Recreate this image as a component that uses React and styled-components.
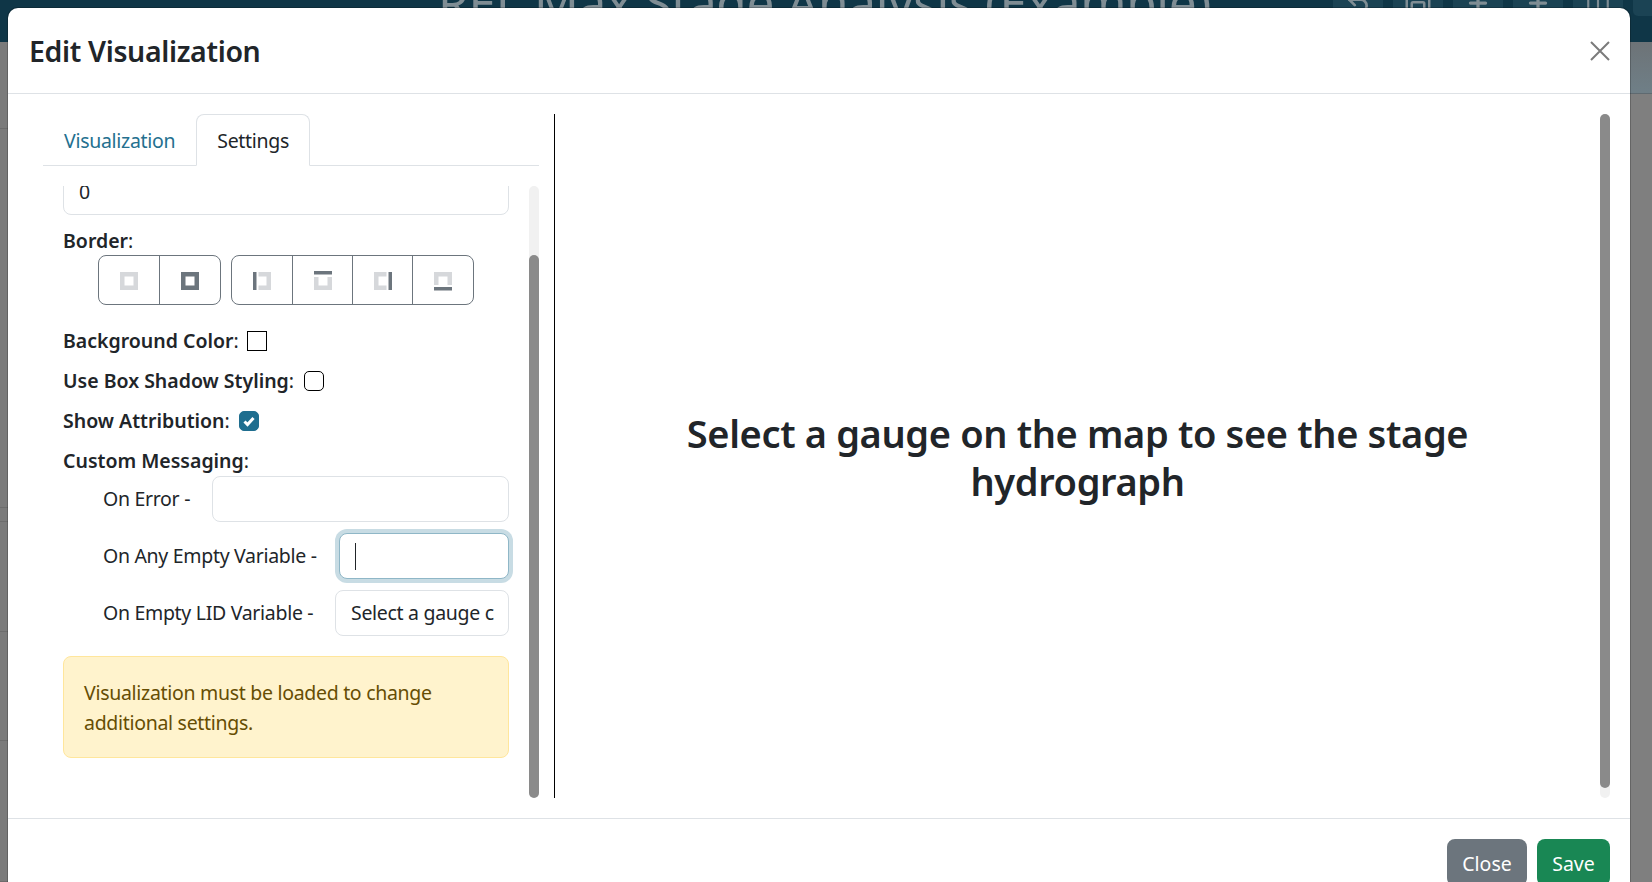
import React from 'react'
import styled, { createGlobalStyle } from 'styled-components'
import { Undo2, Save, Plus, Columns2 } from 'lucide-react'

const GlobalStyle = createGlobalStyle`
  html, body {
    margin: 0;
    padding: 0;
    height: 100%;
    overflow: hidden;
  }
  body {
    font-family: "Noto Sans", "Open Sans", sans-serif;
    font-size: 19.5px;
    line-height: 30px;
    letter-spacing: -0.3px;
    color: #212529;
    background: #7f7f7f;
  }
  * { box-sizing: border-box; }
`

const Page = styled.div`
  position: relative;
  width: 1652px;
  height: 882px;
  overflow: hidden;
  background: #7f7f7f;
`

const TopBar = styled.div`
  height: 42px;
  padding-left: 438px;
  background: #0f3647;
  display: flex;
  color: #7f8d94;
`

const TopTitle = styled.div`
  margin-top: -4px;
  height: 12px;
  font-size: 49.5px;
  line-height: 12px;
  white-space: nowrap;
`

const TopActions = styled.div`
  margin-left: auto;
  margin-right: -31px;
  display: flex;
  gap: 10px;
`

const TopAction = styled.div`
  width: 50px;
  height: 16px;
  background: #1b4354;
  border-radius: 0 0 5px 5px;
  display: flex;
  justify-content: center;
  align-items: flex-end;
  overflow: hidden;
`

const Backdrop = styled.div`
  display: flex;
  height: 840px;
`

const SideStrip = styled.div`
  width: 8px;
  flex: none;
  display: flex;
  flex-direction: column;
`

const SideRow = styled.div`
  height: ${p => p.$h}px;
  flex: none;
  background: #7b7b7b;
  border-bottom: 1px solid #6d6d6d;
`

const BackdropMain = styled.div`
  flex: 1;
`

const SubBar = styled.div`
  height: 52px;
  background: linear-gradient(#6d7377, #6f7f87);
  border-bottom: 1px solid #5f6a70;
`

const Modal = styled.div`
  position: absolute;
  top: 8px;
  left: 8px;
  width: 1622px;
  height: 940px;
  background: #fff;
  border-radius: 10px;
  box-shadow: 0 0 0 1px rgba(0, 0, 0, 0.2);
  display: flex;
  flex-direction: column;
`

const Header = styled.div`
  height: 86px;
  flex: none;
  padding: 1px 20px 0 21px;
  border-bottom: 1px solid #dee2e6;
  display: flex;
  align-items: center;
  justify-content: space-between;
`

const Title = styled.h5`
  margin: 0;
  font-size: 28.5px;
  font-weight: 600;
  letter-spacing: -0.35px;
  line-height: 36px;
`

const CloseX = styled.button`
  border: 0;
  padding: 0;
  background: none;
  width: 20px;
  height: 20px;
  display: flex;
  color: #7b7b7b;
`

const Body = styled.div`
  height: 725px;
  flex: none;
  padding: 20px 20px 20px 35px;
  display: flex;
  border-bottom: 1px solid #dee2e6;
`

const LeftColumn = styled.div`
  width: 512px;
  flex: none;
  padding-right: 15px;
  border-right: 1px solid #000;
  display: flex;
  flex-direction: column;
`

const TabBar = styled.div`
  height: 52px;
  flex: none;
  display: flex;
  align-items: flex-end;
  border-bottom: 1px solid #dee2e6;
`

const Tab = styled.div`
  height: 52px;
  padding: 11px 20px;
  border: 1px solid ${p => (p.$active ? '#dee2e6' : 'transparent')};
  border-bottom-color: ${p => (p.$active ? '#fff' : 'transparent')};
  border-radius: 8px 8px 0 0;
  color: ${p => (p.$active ? '#212529' : '#24708f')};
  background: ${p => (p.$active ? '#fff' : 'transparent')};
  margin-bottom: -1px;
`

const ScrollArea = styled.div`
  flex: 1;
  min-height: 0;
  margin-top: 20px;
  display: flex;
`

const Clip = styled.div`
  flex: 1;
  min-width: 0;
  overflow: hidden;
  padding: 0 20px;
`

const Track = styled.div`
  width: 10px;
  flex: none;
  padding-top: ${p => p.$offset || 0}px;
  background: #f1f1f1;
  border-radius: 5px;
  display: flex;
  flex-direction: column;
`

const Thumb = styled.div`
  flex: ${p => (p.$h ? 'none' : 1)};
  height: ${p => (p.$h ? `${p.$h}px` : 'auto')};
  background: #8a8a8a;
  border-radius: 5px;
`

const Input = styled.div`
  height: 46px;
  flex: none;
  width: ${p => p.$width || 'auto'};
  padding: 0 14px 0 15px;
  border: 1px solid #dee2e6;
  border-radius: 8px;
  background: #fff;
  display: flex;
  align-items: center;
  white-space: nowrap;
  overflow: hidden;
`

const FocusedInput = styled(Input)`
  width: 170px;
  border-color: #8fb7c7;
  box-shadow: 0 0 0 4px #c8dce4;
`

const Caret = styled.span`
  width: 1px;
  height: 27px;
  background: #212529;
`

const TopInput = styled(Input)`
  margin-top: -17px;
`

const FieldLabel = styled.div`
  margin-top: ${p => p.$top || 0}px;
  height: 30px;
  display: flex;
  align-items: center;
`

const Bold = styled.b`
  font-weight: 600;
  letter-spacing: 0;
`

const BorderRow = styled.div`
  margin-top: -1px;
  padding-left: 35px;
  display: flex;
  gap: 10px;
`

const ButtonGroup = styled.div`
  height: 50px;
  padding-right: 1px;
  display: flex;
  border: 1px solid #6c757d;
  border-radius: 8px;
`

const BorderButton = styled.div`
  width: 60px;
  height: 100%;
  padding-top: 2px;
  display: flex;
  align-items: center;
  justify-content: center;
  & + & { border-left: 1px solid #6c757d; }
`

const Swatch = styled.span`
  width: 20px;
  height: 20px;
  margin-left: 9px;
  flex: none;
  border: 1px solid #000;
`

const CheckBox = styled.span`
  width: 20px;
  height: 20px;
  margin-left: 10px;
  flex: none;
  border: 1px solid ${p => (p.$on ? '#1f6e8f' : '#000')};
  border-radius: 5px;
  background: ${p => (p.$on ? '#1f6e8f' : '#fff')};
  display: flex;
  align-items: center;
  justify-content: center;
`

const MessageRow = styled.div`
  padding-left: 40px;
  margin-top: ${p => p.$top || 0}px;
  height: 46px;
  display: flex;
  align-items: center;
  justify-content: space-between;
`

const Alert = styled.div`
  margin-top: 20px;
  height: 102px;
  padding: 21px 20px;
  background: #fff3cd;
  border: 1px solid #ffe69c;
  border-radius: 8px;
  color: #664d03;
`

const RightPanel = styled.div`
  flex: 1;
  min-width: 0;
  display: flex;
`

const Placeholder = styled.div`
  flex: 1;
  min-width: 0;
  padding-top: 2px;
  display: flex;
  align-items: center;
  justify-content: center;
`

const PlaceholderText = styled.h3`
  margin: 0;
  width: 820px;
  text-align: center;
  font-size: 38px;
  font-weight: 600;
  line-height: 48px;
  letter-spacing: -0.36px;
`

const Footer = styled.div`
  padding: 20px;
  display: flex;
  justify-content: flex-end;
  gap: 10px;
`

const ActionButton = styled.button`
  height: 47px;
  width: ${p => p.$w}px;
  border: 0;
  border-radius: 8px;
  padding: 2px 0 0;
  font: inherit;
  color: #fff;
  background: ${p => p.$bg};
`

const GREY = '#6c757d'
const LIGHT = '#d6d8db'

// each variant: the light part of the square, and the dark bar beside it
const borderIcons = {
  none: { light: 'M1 1H19V19H1ZM5.5 5.5V14.5H14.5V5.5Z' },
  all: { dark: 'M1 1H19V19H1ZM5.5 5.5V14.5H14.5V5.5Z' },
  left: { light: 'M6.5 1H19V19H6.5V14.5H14.5V5.5H6.5Z', dark: 'M1 1H4.5V19H1Z' },
  top: { light: 'M1 6H5.5V14.5H14.5V6H19V19H1Z', dark: 'M1 0H19V3.5H1Z' },
  right: { light: 'M13.5 1H1V19H13.5V14.5H5.5V5.5H13.5Z', dark: 'M15.5 1H19V19H15.5Z' },
  bottom: { light: 'M1 1H19V14H14.5V5.5H5.5V14H1Z', dark: 'M1 16H19V19.5H1Z' },
}

function BorderIcon({ side }) {
  const { light, dark } = borderIcons[side]
  return (
    <svg width="20" height="20" viewBox="0 0 20 20">
      {light && <path d={light} fill={LIGHT} fillRule="evenodd" />}
      {dark && <path d={dark} fill={GREY} fillRule="evenodd" />}
    </svg>
  )
}

const sideRows = [87, 379, 14, 110, 109, 141]

export default function App() {
  return (
    <Page>
      <GlobalStyle />
      <TopBar>
        <TopTitle>REL Max Stage Analysis (Example)</TopTitle>
        <TopActions>
          <TopAction><Undo2 size={26} strokeWidth={2.5} /></TopAction>
          <TopAction><Save size={30} strokeWidth={2} /></TopAction>
          <TopAction><Plus size={26} strokeWidth={3} /></TopAction>
          <TopAction><Plus size={26} strokeWidth={3} /></TopAction>
          <TopAction><Columns2 size={26} strokeWidth={2} /></TopAction>
          <TopAction />
        </TopActions>
      </TopBar>
      <Backdrop>
        <SideStrip>
          {sideRows.map((h, i) => <SideRow key={i} $h={h} />)}
        </SideStrip>
        <BackdropMain>
          <SubBar />
        </BackdropMain>
      </Backdrop>
      <Modal>
        <Header>
          <Title>Edit Visualization</Title>
          <CloseX aria-label="Close">
            <svg width="20" height="20" viewBox="0 0 20 20">
              <path d="M1 1l18 18M19 1L1 19" stroke="currentColor" strokeWidth="2" fill="none" />
            </svg>
          </CloseX>
        </Header>
        <Body>
          <LeftColumn>
            <TabBar>
              <Tab>Visualization</Tab>
              <Tab $active>Settings</Tab>
            </TabBar>
            <ScrollArea>
              <Clip>
                <TopInput>0</TopInput>
                <FieldLabel $top={11}><span><Bold>Border</Bold>:</span></FieldLabel>
                <BorderRow>
                  <ButtonGroup>
                    <BorderButton><BorderIcon side="none" /></BorderButton>
                    <BorderButton><BorderIcon side="all" /></BorderButton>
                  </ButtonGroup>
                  <ButtonGroup>
                    <BorderButton><BorderIcon side="left" /></BorderButton>
                    <BorderButton><BorderIcon side="top" /></BorderButton>
                    <BorderButton><BorderIcon side="right" /></BorderButton>
                    <BorderButton><BorderIcon side="bottom" /></BorderButton>
                  </ButtonGroup>
                </BorderRow>
                <FieldLabel $top={21}><span><Bold>Background Color</Bold>:</span><Swatch /></FieldLabel>
                <FieldLabel $top={10}><span><Bold>Use Box Shadow Styling</Bold>:</span><CheckBox /></FieldLabel>
                <FieldLabel $top={10}>
                  <span><Bold>Show Attribution</Bold>:</span>
                  <CheckBox $on>
                    <svg width="14" height="14" viewBox="0 0 14 14">
                      <path d="M2.5 7.5l3 3 6-6.5" stroke="#fff" strokeWidth="3" fill="none" />
                    </svg>
                  </CheckBox>
                </FieldLabel>
                <FieldLabel $top={10}><span><Bold>Custom Messaging</Bold>:</span></FieldLabel>
                <MessageRow>
                  <span>On Error -</span>
                  <Input $width="297px" />
                </MessageRow>
                <MessageRow $top={11}>
                  <span>On Any Empty Variable -</span>
                  <FocusedInput><Caret /></FocusedInput>
                </MessageRow>
                <MessageRow $top={11}>
                  <span>On Empty LID Variable -</span>
                  <Input $width="174px">Select a gauge c</Input>
                </MessageRow>
                <Alert>Visualization must be loaded to change additional settings.</Alert>
              </Clip>
              <Track $offset={69}>
                <Thumb />
              </Track>
            </ScrollArea>
          </LeftColumn>
          <RightPanel>
            <Placeholder>
              <PlaceholderText>Select a gauge on the map to see the stage hydrograph</PlaceholderText>
            </Placeholder>
            <Track>
              <Thumb $h={674} />
            </Track>
          </RightPanel>
        </Body>
        <Footer>
          <ActionButton $w={80} $bg="#6c757d">Close</ActionButton>
          <ActionButton $w={73} $bg="#198754">Save</ActionButton>
        </Footer>
      </Modal>
    </Page>
  )
}
